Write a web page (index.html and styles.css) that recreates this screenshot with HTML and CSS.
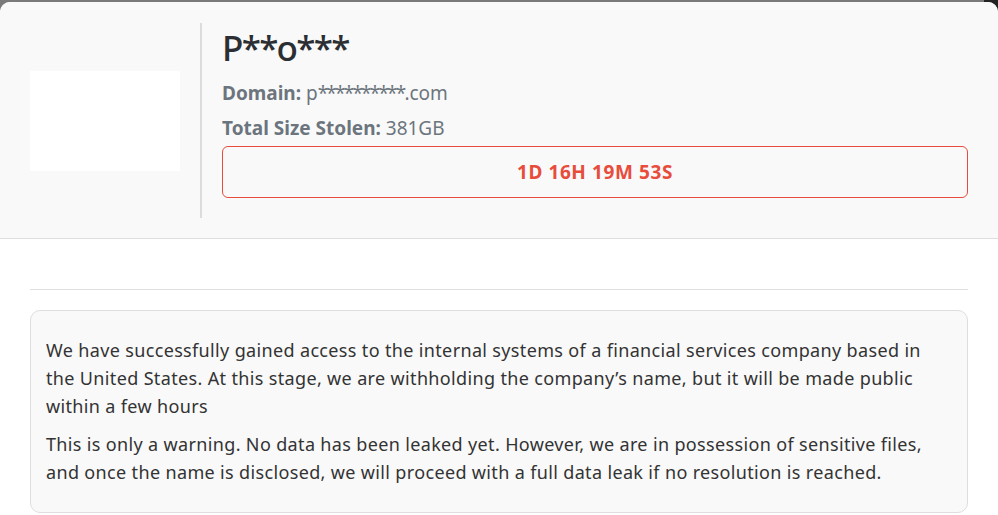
FILE: index.html
```html
<!DOCTYPE html>
<html>
<head>
<meta charset="utf-8">
<link rel="stylesheet" href="styles.css">
</head>
<body>
<div class="corner"></div>
<div class="modal">
  <header class="head">
    <div class="logo"></div>
    <div class="info">
      <h1 class="title">P**o***</h1>
      <p class="meta"><b>Domain:</b> p<span class="mask">**********</span>.com</p>
      <p class="meta last"><b>Total Size Stolen:</b> 381GB</p>
      <div class="timer">1D 16H 19M 53S</div>
    </div>
  </header>
  <main class="body">
    <hr class="rule">
    <div class="desc">
      <p>We have successfully gained access to the internal systems of a financial services company based in the United States. At this stage, we are withholding the company’s name, but it will be made public within a few hours</p>
      <p>This is only a warning. No data has been leaked yet. However, we are in possession of sensitive files, and once the name is disclosed, we will proceed with a full data leak if no resolution is reached.</p>
    </div>
  </main>
</div>
</body>
</html>
```
FILE: styles.css
```css
html, body {
  margin: 0;
  padding: 0;
}
body {
  background: #7a7a7a;
  font-family: "Noto Sans", "Open Sans", sans-serif;
  color: #333;
  height: 515px;
  overflow: hidden;
  position: relative;
}
.corner {
  position: absolute;
  top: 0;
  right: 0;
  width: 14px;
  height: 14px;
  background: #222;
}
.modal {
  position: relative;
  margin-top: 2px;
  background: #fff;
  border-radius: 10px 10px 0 0;
  height: 513px;
  overflow: hidden;
}
.head {
  display: flex;
  align-items: stretch;
  background: #f9f9f9;
  border-bottom: 1px solid #dedede;
  padding: 21px 30px 20px 30px;
}
.logo {
  width: 150px;
  height: 100px;
  background: #fff;
  align-self: center;
  margin-right: 20px;
  flex: none;
}
.info {
  flex: 1;
  border-left: 2px solid #dcdcdc;
  padding-left: 20px;
  padding-bottom: 20px;
}
.title {
  margin: 5px 0 12px 0;
  font-size: 35px;
  font-weight: 500;
  line-height: 40px;
  letter-spacing: -1.7px;
  color: #2b2f33;
}
.meta {
  margin: 0 0 8px 0;
  font-size: 19px;
  line-height: 27px;
  color: #6c757d;
}
.meta.last {
  margin-bottom: 4px;
}
.meta b {
  font-weight: 700;
}
.mask {
  letter-spacing: -1.8px;
}
.timer {
  border: 1px solid #e74c3c;
  border-radius: 6px;
  height: 50px;
  display: flex;
  align-items: center;
  justify-content: center;
  color: #e74c3c;
  font-weight: 700;
  font-size: 19px;
  letter-spacing: 0.6px;
}
.body {
  padding: 0 30px;
}
.rule {
  border: 0;
  border-top: 1px solid #dedede;
  margin: 50px 0 20px 0;
}
.desc {
  background: #f9f9f9;
  border: 1px solid #dedede;
  border-radius: 10px;
  padding: 25px 15px 16px 15px;
  font-size: 18px;
  line-height: 28px;
  letter-spacing: 0.35px;
  color: #333;
}
.desc p {
  margin: 0 0 10px 0;
}
```
